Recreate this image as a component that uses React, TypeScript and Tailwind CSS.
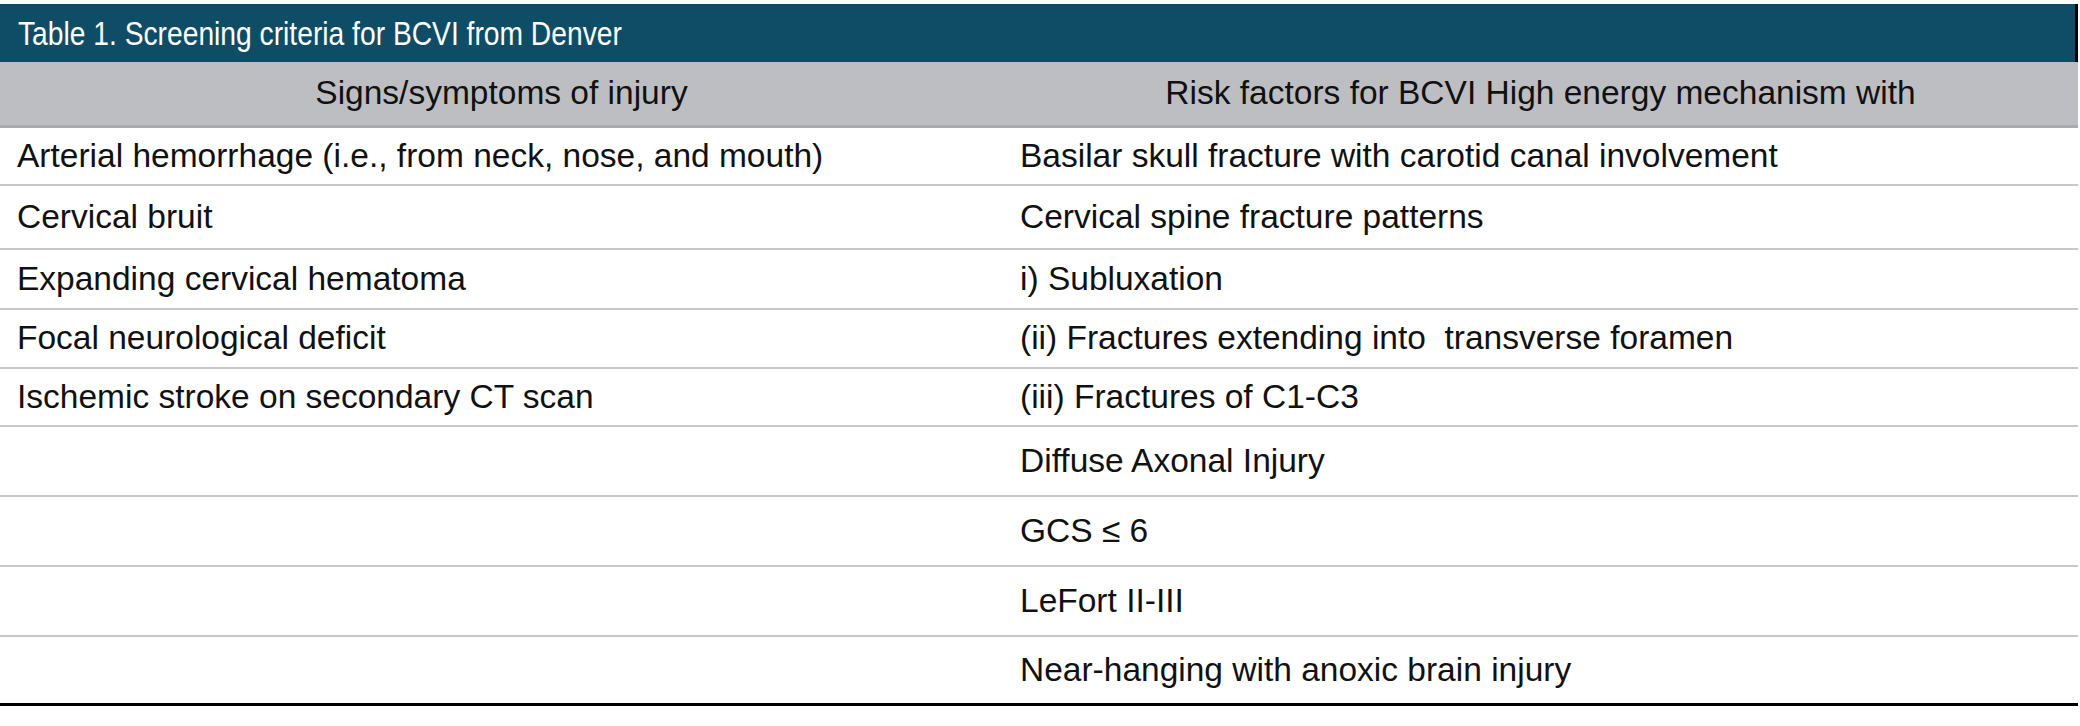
const rows: { left: string; right: string; h: string }[] = [
  { left: 'Arterial hemorrhage (i.e., from neck, nose, and mouth)', right: 'Basilar skull fracture with carotid canal involvement', h: 'h-[58px]' },
  { left: 'Cervical bruit', right: 'Cervical spine fracture patterns', h: 'h-[64px]' },
  { left: 'Expanding cervical hematoma', right: 'i) Subluxation', h: 'h-[60px]' },
  { left: 'Focal neurological deficit', right: '(ii) Fractures extending into  transverse foramen', h: 'h-[59px]' },
  { left: 'Ischemic stroke on secondary CT scan', right: '(iii) Fractures of C1-C3', h: 'h-[58px]' },
  { left: '', right: 'Diffuse Axonal Injury', h: 'h-[70px]' },
  { left: '', right: 'GCS \u2264 6', h: 'h-[70px]' },
  { left: '', right: 'LeFort II-III', h: 'h-[70px]' },
  { left: '', right: 'Near-hanging with anoxic brain injury', h: 'h-[69px]' },
];

export default function App() {
  return (
    <div className="w-[2080px] h-[726px] bg-white pt-[4px] text-[#111]" style={{ fontFamily: '"Liberation Sans", Arial, sans-serif' }}>
      <div className="w-[2078px]">
        <div className="h-[58px] bg-[#0f4d66] border-r-[3px] border-black flex items-center pl-[18px] overflow-hidden">
          <span className="inline-block whitespace-nowrap text-white text-[34px] leading-none scale-x-[0.83] origin-left">
            Table 1. Screening criteria for BCVI from Denver
          </span>
        </div>

        <div className="grid grid-cols-[1003px_1fr] h-[66px] bg-[#bdbec2] border-b-[3px] border-[#aaabae] text-[33.5px]">
          <div className="flex items-center justify-center">Signs/symptoms of injury</div>
          <div className="flex items-center justify-center">Risk factors for BCVI High energy mechanism with</div>
        </div>

        {rows.map((row, i) => (
          <div
            key={i}
            className={`grid grid-cols-[1003px_1fr] text-[33.5px] ${row.h} ${
              i === rows.length - 1 ? 'border-b-[3px] border-black' : 'border-b-2 border-[#c8c8c8]'
            }`}
          >
            <div className="flex items-center pl-[17px] whitespace-pre">{row.left}</div>
            <div className="flex items-center pl-[17px] whitespace-pre">{row.right}</div>
          </div>
        ))}
      </div>
    </div>
  );
}
